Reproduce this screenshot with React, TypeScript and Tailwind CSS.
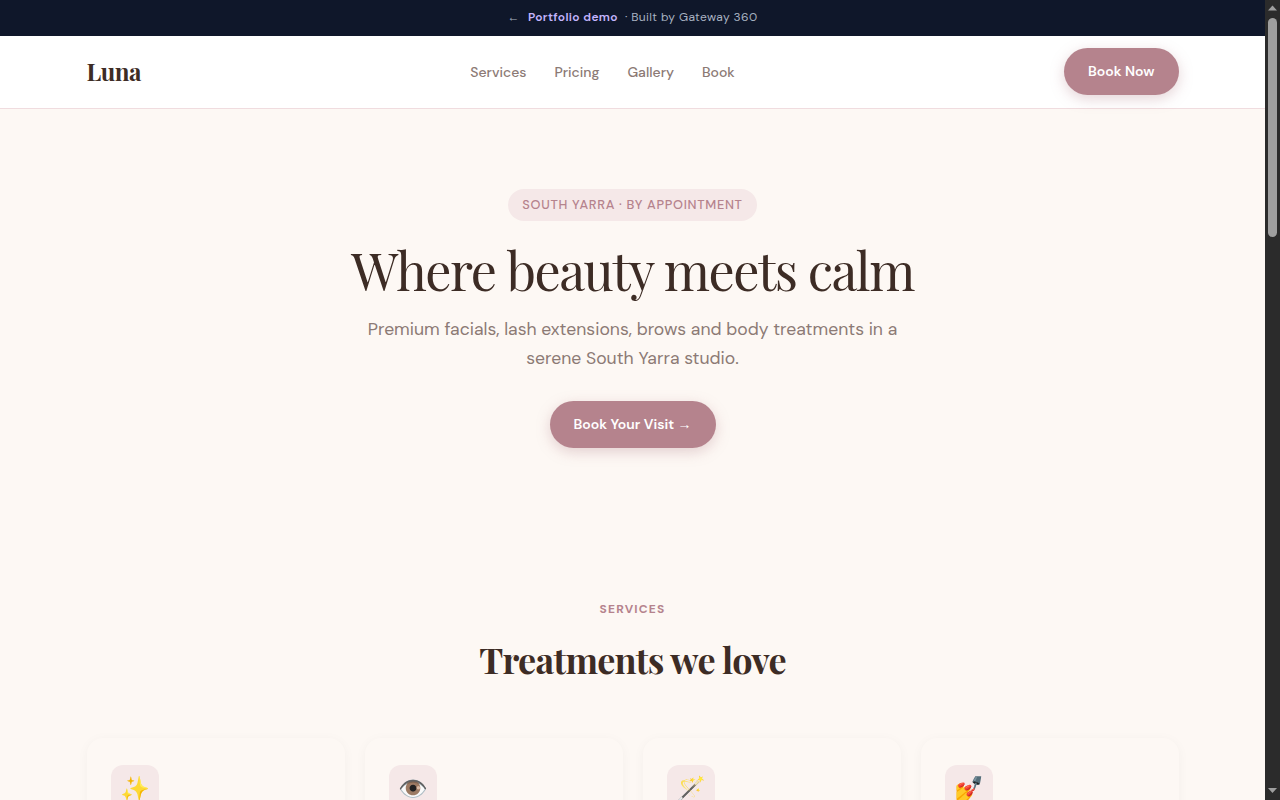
import React from "react";

const sans = "font-['DM_Sans','Inter','Noto_Sans',sans-serif]";
const serif = "font-['Playfair_Display','Liberation_Serif',serif]";
const arrow = "font-['Liberation_Sans',sans-serif] font-normal";

const services = [
  { icon: "✨", title: "Signature Facial", text: "A deep cleanse, gentle massage and mask, tailored to your skin." },
  { icon: "👁️", title: "Lash Extensions", text: "Classic, hybrid and volume sets applied with care." },
  { icon: "🪄", title: "Brow Styling", text: "Shaping, tinting and lamination to frame your face." },
  { icon: "💅", title: "Body Treatments", text: "Relaxing scrubs and wraps that leave skin soft and glowing." },
];

const links = ["Services", "Pricing", "Gallery", "Book"];

function Scrollbar() {
  return (
    <div className="flex h-full w-[15px] shrink-0 flex-col items-center bg-[#2b2b2b]">
      <svg width="15" height="17" viewBox="0 0 15 17" className="shrink-0">
        <path d="M3 10.5 L7.5 5.5 L12 10.5 Z" fill="#9f9f9f" />
      </svg>
      <div className="mt-px h-[219px] w-[9px] rounded-full bg-[#9f9f9f]" />
      <div className="flex-1" />
      <svg width="15" height="17" viewBox="0 0 15 17" className="shrink-0">
        <path d="M3 5 L7.5 10 L12 5 Z" fill="#9f9f9f" />
      </svg>
    </div>
  );
}

export default function App() {
  return (
    <div className={`flex h-screen overflow-hidden bg-[#fdf8f4] text-[#3d2c25] ${sans}`}>
      <div className="min-w-0 flex-1">
        {/* Demo banner */}
        <div className="flex h-9 items-center justify-center bg-[#0f172a] pb-0.5 text-xs tracking-[0.36px] text-[#a8b2c1]">
          <span className={`mr-2 ${arrow}`}>←</span>
          <span className="mr-[7px] font-semibold text-[#c4b5fd]">Portfolio demo</span>
          <span>· Built by Gateway 360</span>
        </div>

        {/* Nav */}
        <nav className="border-b border-[#f0dcdf] bg-white">
          <div className="mx-auto flex h-[72px] max-w-[1140px] items-center justify-between px-6 pb-px">
            <span className={`-mt-0.5 text-2xl font-bold tracking-[-0.48px] ${serif}`}>Luna</span>
            <div className="flex gap-7 text-sm font-medium text-[#8c7a75]">
              {links.map((l) => (
                <a key={l}>{l}</a>
              ))}
            </div>
            <button className="h-[47px] rounded-full bg-[#b5838d] px-6 pb-px text-sm font-semibold text-white shadow-[0_4px_14px_rgba(181,131,141,0.35)]">
              Book Now
            </button>
          </div>
        </nav>

        {/* Hero */}
        <section className="flex flex-col items-center pt-20 text-center">
          <span className="rounded-full bg-[#f5e8e8] px-3.5 py-1.5 text-[12.8px] leading-5 font-medium tracking-[0.71px] text-[#b5838d]">
            SOUTH YARRA · BY APPOINTMENT
          </span>
          <h1 className={`mt-[19px] text-[52px] leading-[1.15] font-normal tracking-[-1.56px] ${serif}`}>Where beauty meets calm</h1>
          <p className="mt-[15px] max-w-[560px] text-[17.6px] leading-[29px] text-[#8c7a75]">
            Premium facials, lash extensions, brows and body treatments in a serene South Yarra studio.
          </p>
          <button className="mt-7 h-[47px] w-[166px] rounded-full bg-[#b5838d] text-sm font-semibold text-white shadow-[0_4px_14px_rgba(181,131,141,0.35)]">
            Book Your Visit <span className={arrow}>→</span>
          </button>
        </section>

        {/* Services */}
        <section className="mx-auto max-w-[1140px] px-6 pt-[153px]">
          <p className="text-center text-xs font-bold tracking-[1.2px] text-[#b5838d]">SERVICES</p>
          <h2 className={`mt-[22px] text-center text-4xl font-bold tracking-[-0.72px] ${serif}`}>Treatments we love</h2>
          <div className="mt-[59px] grid grid-cols-4 gap-5">
            {services.map((s) => (
              <div key={s.title} className="rounded-2xl bg-[#fdf8f4] px-6 py-[27px] shadow-[0_2px_12px_rgba(61,44,41,0.04)]">
                <div className="flex h-12 w-12 items-center justify-center rounded-xl bg-[#f5e8e8] text-2xl">{s.icon}</div>
                <h3 className={`mt-4 text-lg font-semibold ${serif}`}>{s.title}</h3>
                <p className="mt-2 text-sm leading-6 text-[#8c7a75]">{s.text}</p>
              </div>
            ))}
          </div>
        </section>
      </div>
      <Scrollbar />
    </div>
  );
}
